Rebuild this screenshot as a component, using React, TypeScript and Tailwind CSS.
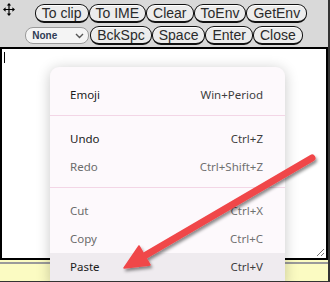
const ROW1 = ["To clip", "To IME", "Clear", "ToEnv", "GetEnv"];
const ROW2 = ["BckSpc", "Space", "Enter", "Close"];

type Item = { label: string; keys: string; dim?: boolean; active?: boolean };

const GROUPS: Item[][] = [
  [{ label: "Emoji", keys: "Win+Period" }],
  [
    { label: "Undo", keys: "Ctrl+Z" },
    { label: "Redo", keys: "Ctrl+Shift+Z", dim: true },
  ],
  [
    { label: "Cut", keys: "Ctrl+X", dim: true },
    { label: "Copy", keys: "Ctrl+C", dim: true },
    { label: "Paste", keys: "Ctrl+V", active: true },
  ],
];

function PillButton({ label }: { label: string }) {
  return (
    <button
      type="button"
      className="h-[19px] rounded-[9px] border border-b-2 border-[#111] bg-[#ececec] px-[6px] text-[14px] leading-[15px] text-[#2a2a2a] shadow-[inset_0_1px_0_#fff]"
    >
      {label}
    </button>
  );
}

function MoveGlyph() {
  return (
    <svg width="12" height="13" viewBox="0 0 12 13" className="shrink-0">
      <path d="M6 2v9M1.5 6.5h9" stroke="#000" strokeWidth="1.2" />
      <path d="M6 0l2.2 2.6H3.8zM6 13l2.2-2.6H3.8zM0 6.5l2.6-2.2v4.4zM12 6.5l-2.6-2.2v4.4z" fill="#000" />
    </svg>
  );
}

function ContextMenu() {
  return (
    <div className="absolute left-[50px] top-[67px] w-[235px] rounded-t-[9px] bg-[#fdf9fc] pt-[14px] pb-[4px] font-['Noto_Sans',sans-serif] text-[11.5px] shadow-[0_2px_14px_rgba(0,0,0,0.22)]">
      {GROUPS.map((group, gi) => (
        <div key={gi}>
          {gi > 0 && (
            <div className="pt-[6px] pb-[9px]">
              <div className="h-px bg-[#f3d6e6]" />
            </div>
          )}
          {group.map((it) => (
            <div
              key={it.label}
              className={`flex h-[28px] items-center justify-between pl-[20px] pr-[22px] ${
                it.active ? "bg-[#efebef]" : ""
              }`}
            >
              <span className={it.dim ? "text-[#6b6b6b]" : "text-[#1b1b1b]"}>
                {it.label}
              </span>
              <span className={it.dim ? "text-[#707070]" : "text-[#3e3e3e]"}>
                {it.keys}
              </span>
            </div>
          ))}
        </div>
      ))}
    </div>
  );
}

export default function App() {
  return (
    <div className="relative h-[282px] w-[330px] overflow-hidden border-r-2 border-b border-[#333] bg-[#d9d9d9] font-['Liberation_Sans',Arial,sans-serif]">
      {/* toolbar */}
      <div className="flex h-[47px] flex-col pt-[4px]">
        <div className="flex items-start">
          <div className="w-[14px] shrink-0 pl-[3px] -mt-[1px]">
            <MoveGlyph />
          </div>
          <div className="flex flex-1 justify-center">
            {ROW1.map((b) => (
              <PillButton key={b} label={b} />
            ))}
          </div>
        </div>
        <div className="mt-[3px] flex items-center justify-center">
          <div className="mr-[1px] flex h-[17px] w-[64px] items-center justify-between rounded-[8px] border border-[#9a9a9a] bg-[#f4f4f4] pl-[6px] pr-[4px] text-[10px] font-bold text-[#2f3b55]">
            <span>None</span>
            <svg width="9" height="6" viewBox="0 0 9 6" fill="none">
              <path d="M1 1l3.5 3.5L8 1" stroke="#555" strokeWidth="1.4" />
            </svg>
          </div>
          {ROW2.map((b) => (
            <PillButton key={b} label={b} />
          ))}
        </div>
      </div>

      {/* text area */}
      <div className="relative h-[213px] border-2 border-black bg-white">
        <div className="absolute left-[2px] top-[3px] h-[11px] w-px bg-black" />
        <svg
          className="absolute bottom-[1px] right-[1px]"
          width="9"
          height="9"
          viewBox="0 0 9 9"
        >
          <path d="M8 1L1 8M8 5L5 8" stroke="#777" strokeWidth="1" />
        </svg>
      </div>

      {/* status strip */}
      <div className="h-[22px] bg-[#fbfbc2] pt-[2px]">
        <div className="h-[2px] bg-[#9a9a9a]" />
      </div>

      <ContextMenu />

      {/* callout arrow */}
      <svg
        className="pointer-events-none absolute left-0 top-0"
        width="330"
        height="282"
        viewBox="0 0 330 282"
      >
        <defs>
          <filter id="sh" x="-10%" y="-10%" width="130%" height="140%">
            <feDropShadow dx="1.5" dy="2.5" stdDeviation="1.6" floodColor="#000" floodOpacity="0.45" />
          </filter>
        </defs>
        <g filter="url(#sh)" fill="#f0474a" stroke="#f0474a">
          <line x1="312" y1="158" x2="146" y2="255" strokeWidth="7" strokeLinecap="round" />
          <polygon points="124,268 150,265 139,246" strokeWidth="1.5" strokeLinejoin="round" />
        </g>
      </svg>
    </div>
  );
}
